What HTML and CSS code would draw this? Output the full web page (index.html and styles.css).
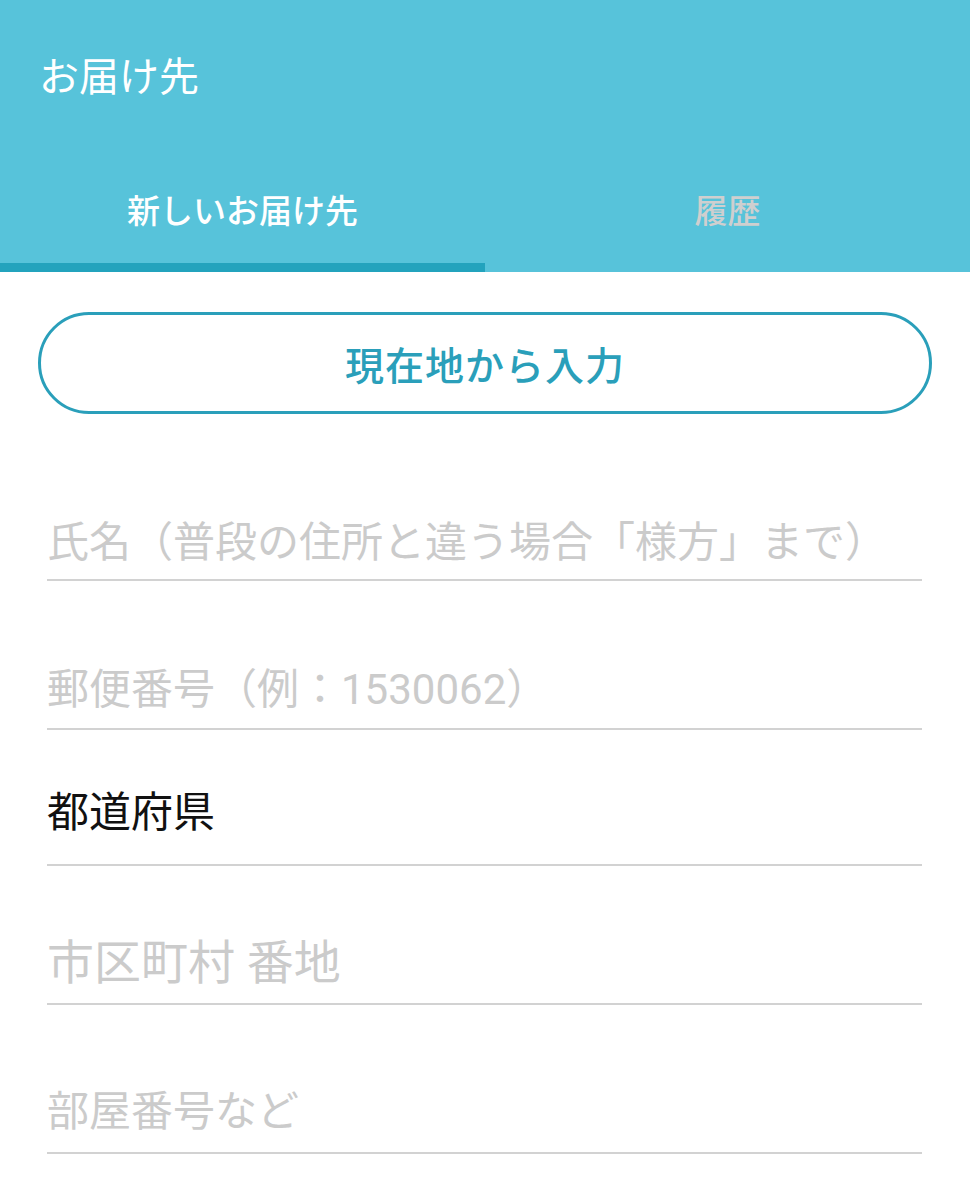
FILE: index.html
```html
<!DOCTYPE html>
<html lang="ja">
<head>
  <meta charset="UTF-8">
  <meta name="viewport" content="width=device-width, initial-scale=1.0">
  <title>お届け先</title>
  <link rel="stylesheet" href="styles.css">
</head>
<body>

<header class="appbar">
  <div class="appbar-title">お届け先</div>
  <div class="tabs">
    <div class="tab active">
      <span class="tab-label">新しいお届け先</span>
      <span class="tab-indicator"></span>
    </div>
    <div class="tab">
      <span class="tab-label">履歴</span>
      <span class="tab-indicator"></span>
    </div>
  </div>
</header>

<main class="form">
  <button class="locate-btn">現在地から入力</button>

  <div class="field field-name">
    <span class="placeholder">氏名（普段の住所と違う場合「様方」まで）</span>
  </div>
  <div class="field field-zip">
    <span class="placeholder">郵便番号（例：1530062）</span>
  </div>
  <div class="field field-pref">
    <span class="value">都道府県</span>
  </div>
  <div class="field field-city">
    <span class="placeholder">市区町村 番地</span>
  </div>
  <div class="field field-room">
    <span class="placeholder">部屋番号など</span>
  </div>
</main>

</body>
</html>
```

FILE: styles.css
```css
body {
  font-family: Roboto, "Noto Sans CJK JP", sans-serif;
  background-color: #fff;
  margin: 0;
  padding: 0;
}

.appbar {
  background-color: #57c3da;
  color: #fff;
}

.appbar-title {
  height: 148px;
  padding-bottom: 6px;
  display: flex;
  align-items: center;
  padding-left: 39px;
  font-size: 40px;
}

.tabs {
  display: flex;
}

.tab {
  flex: 1;
  display: flex;
  flex-direction: column;
}

.tab-label {
  height: 109px;
  display: flex;
  align-items: center;
  justify-content: center;
  font-size: 33px;
  font-weight: 500;
  color: #cfcfcf;
}

.tab-indicator {
  height: 9px;
}

.tab.active .tab-label {
  color: #fff;
}

.tab.active .tab-indicator {
  background-color: #23a3bd;
}

.form {
  padding: 40px 38px 0;
}

.locate-btn {
  display: block;
  width: 100%;
  height: 102px;
  border: 3px solid #2a9fba;
  border-radius: 51px;
  background: #fff;
  color: #2a9fba;
  font-family: Roboto, "Noto Sans CJK JP", sans-serif;
  font-size: 39px;
  font-weight: 500;
  letter-spacing: 1px;
  padding: 0;
}

.field {
  margin: 0 10px 0 9px;
  border-bottom: 2px solid #d2d2d2;
  line-height: 48px;
  font-size: 42px;
}

.placeholder {
  color: #cbcbcb;
}

.value {
  color: #111;
}

.field-name {
  margin-top: 105px;
  padding-bottom: 12px;
}

.field-zip {
  margin-top: 85px;
  padding-bottom: 14px;
}

.field-pref {
  margin-top: 59px;
  padding-bottom: 27px;
}

.field-city {
  margin-top: 73px;
  padding-bottom: 16px;
  font-size: 47px;
}

.field-room {
  margin-top: 83px;
  padding-bottom: 16px;
}
```
